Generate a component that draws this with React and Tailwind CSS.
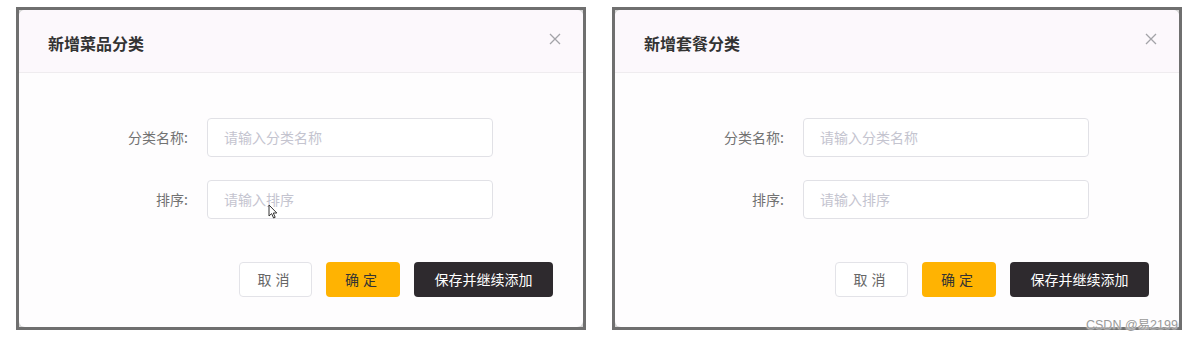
import React from "react";

const font = { fontFamily: '"Noto Sans CJK SC", "Noto Sans", sans-serif' };

const Field = ({ label, placeholder, cursor }) => (
  <div className="flex items-center">
    <label className="w-[188px] pr-[19px] text-right text-[14px] text-[#727272]">{label}</label>
    <div className="relative flex h-[39px] w-[286px] items-center rounded-[4px] border border-[#e1e1e6] bg-white px-[16px] text-[14px] text-[#c4c4cf]">
      {placeholder}
      {cursor && (
        <svg className="absolute left-[60px] top-[23px]" width="10" height="15" viewBox="0 0 10 15">
          <path d="M1 1 L1 12 L3.6 9.6 L5.6 14 L7.2 13.3 L5.3 9 L8.8 9 Z" fill="#fff" stroke="#333" strokeWidth="1" strokeLinejoin="round" />
        </svg>
      )}
    </div>
  </div>
);

const Dialog = ({ title, cursor }) => (
  <div className="w-[570px] border-[3px] border-[#6f6f6f] bg-[#d6d6d6]">
    <div className="flex h-[317px] flex-col overflow-hidden rounded-[6px] bg-[#fefdfe]">
      <div className="flex h-[63px] items-start justify-between border-b border-[#efecef] bg-[#fcf8fc] pl-[29px] pr-[22px]">
        <h2 className="mt-[21px] text-[16px] font-bold text-[#333]">{title}</h2>
        <svg className="mt-[23px]" width="12" height="12" viewBox="0 0 12 12">
          <path d="M1 1 L11 11 M11 1 L1 11" stroke="#a3a3a8" strokeWidth="1.3" />
        </svg>
      </div>
      <div className="flex flex-col gap-[23px] pt-[45px]">
        <Field label="分类名称:" placeholder="请输入分类名称" />
        <Field label="排序:" placeholder="请输入排序" cursor={cursor} />
      </div>
      <div className="mt-[43px] flex justify-end gap-[14px] pr-[30px]">
        <button className="h-[35px] w-[73px] rounded-[4px] border border-[#e3e3e8] bg-white text-[14px] tracking-[4px] text-[#666]">
          取消
        </button>
        <button className="h-[35px] w-[74px] rounded-[4px] bg-[#ffb302] text-[14px] tracking-[4px] text-[#333]">
          确定
        </button>
        <button className="h-[35px] w-[139px] rounded-[4px] bg-[#2e2a2e] text-[14px] text-white">
          保存并继续添加
        </button>
      </div>
    </div>
  </div>
);

export default function App() {
  return (
    <div className="relative h-[340px] w-[1195px] bg-white" style={font}>
      <div className="flex gap-[26px] pl-[16px] pt-[7px]">
        <Dialog title="新增菜品分类" cursor />
        <Dialog title="新增套餐分类" />
      </div>
      <span
        className="absolute left-[1086px] top-[316px] text-[12.5px] text-[#9a9a9a]"
        style={{ fontFamily: '"Liberation Sans", "Noto Sans CJK SC", sans-serif', textShadow: "0 0 2px #fff, 0 0 2px #fff" }}
      >
        CSDN @易2199
      </span>
    </div>
  );
}
